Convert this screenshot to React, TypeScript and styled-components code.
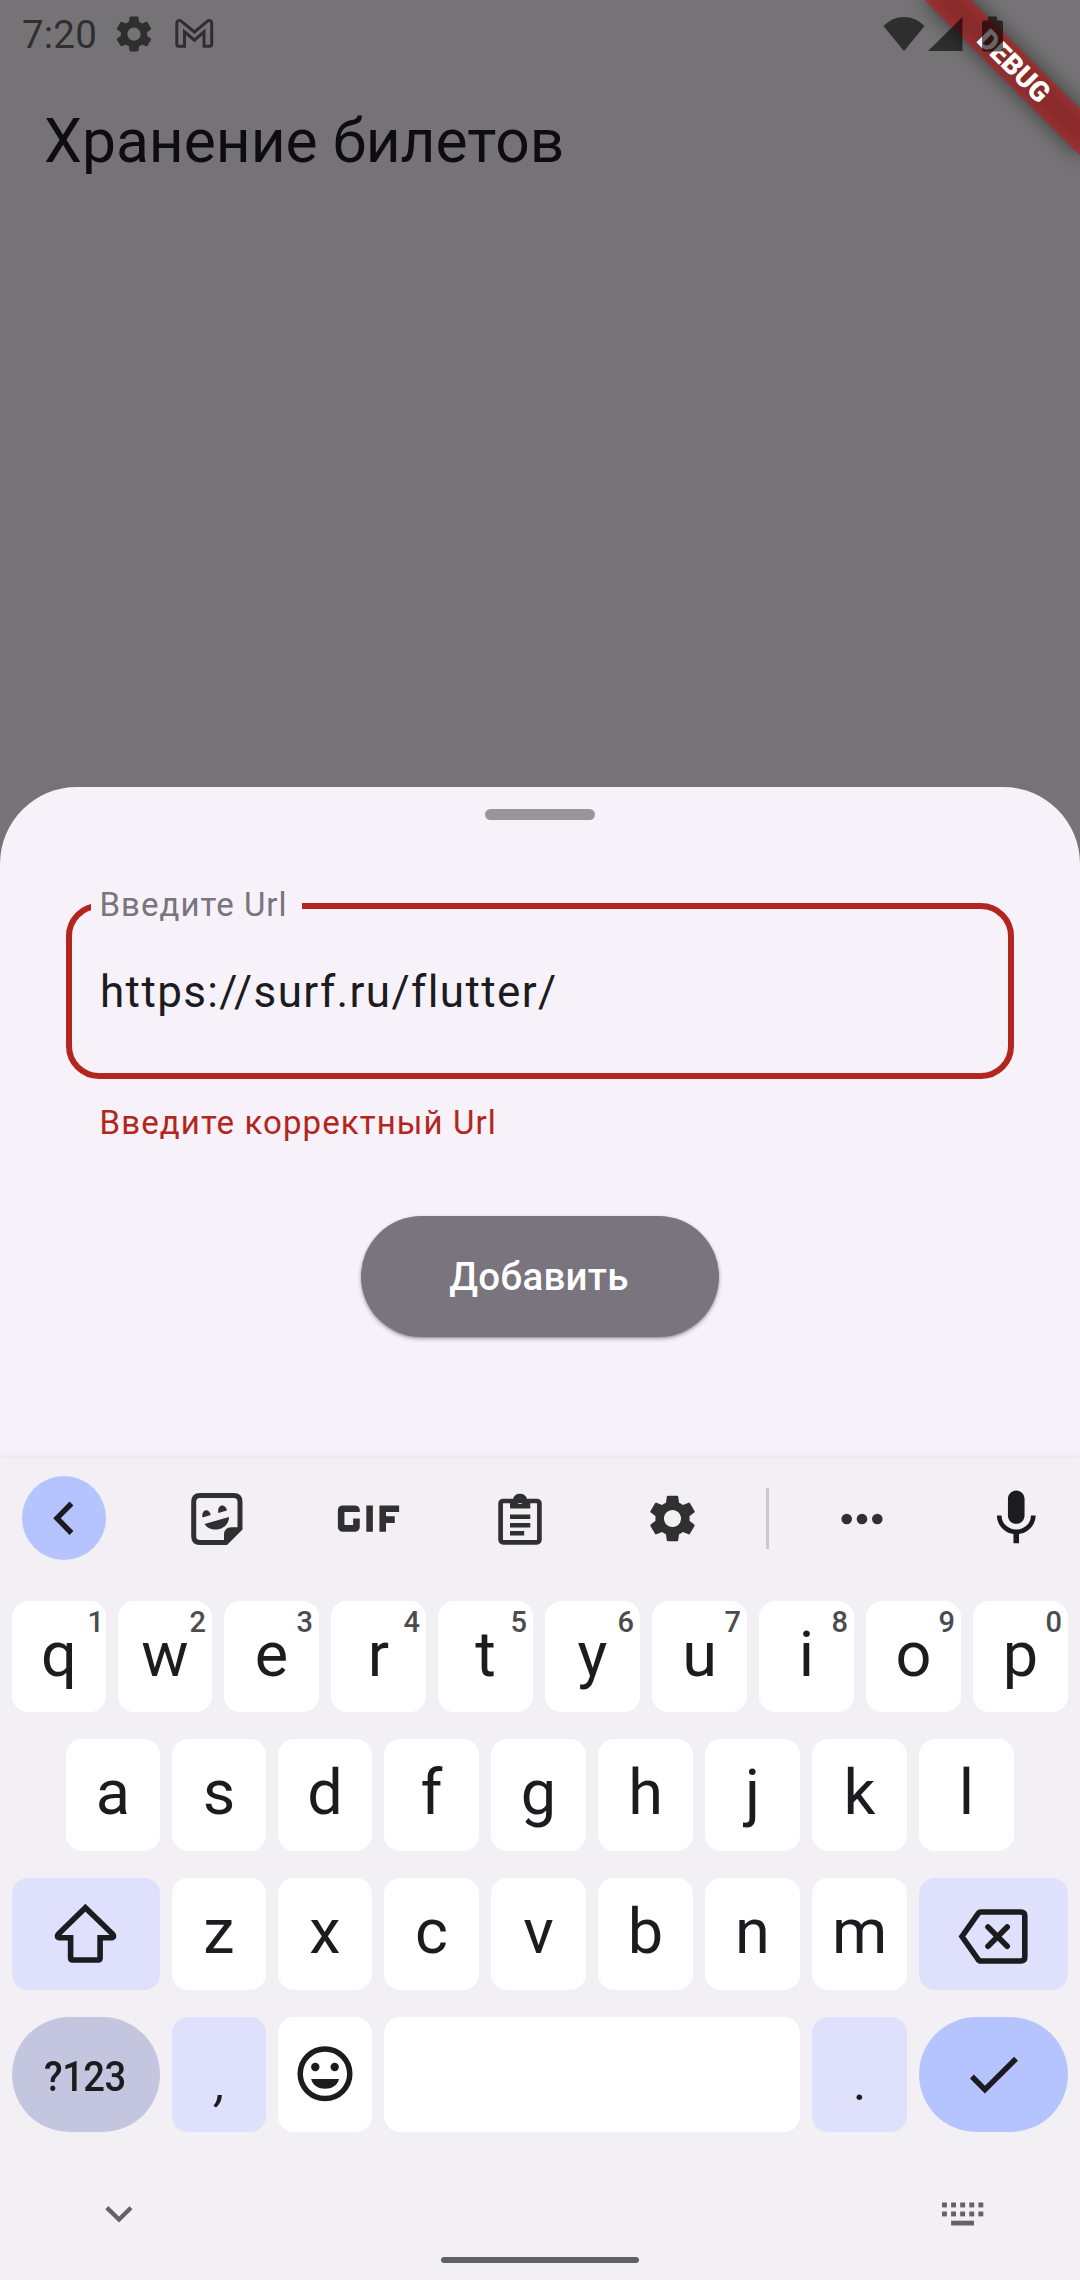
import React from "react";
import styled, { createGlobalStyle } from "styled-components";
import { MdGif, MdMic, MdSettings } from "react-icons/md";

const GlobalStyle = createGlobalStyle`
  html, body { margin: 0; padding: 0; }
  body { width: 1080px; height: 2280px; overflow: hidden; background: #757375; }
  svg { display: block; flex: none; }
`;

const Screen = styled.div`
  position: relative;
  display: flex;
  flex-direction: column;
  width: 1080px;
  height: 2280px;
  overflow: hidden;
  background: #757375;
  font-family: Roboto, "Noto Sans", sans-serif;
`;

const StatusBar = styled.header`
  position: relative;
  z-index: 2;
  display: flex;
  align-items: center;
  box-sizing: border-box;
  height: 66px;
  padding: 1px 77px 0 22px;
  color: rgba(0, 0, 0, 0.6);
`;

const Clock = styled.span`
  width: 90px;
  padding-top: 2px;
  font-size: 38.5px;
  line-height: 66px;
  letter-spacing: 0.2px;
`;

const StatusGroup = styled.div<{ $gap: number; $push?: boolean }>`
  display: flex;
  align-items: center;
  gap: ${(p) => p.$gap}px;
  margin-left: ${(p) => (p.$push ? "auto" : "0")};
`;

const BannerClip = styled.div`
  position: absolute;
  top: 0;
  right: 0;
  width: 260px;
  height: 260px;
  overflow: hidden;
`;

const BannerFrame = styled.div`
  position: absolute;
  top: 77px;
  left: 150px;
  width: 220px;
  height: 33px;
  transform-origin: 110px -77px;
  transform: rotate(45deg);
`;

const BannerShadow = styled.div`
  position: absolute;
  inset: 0;
  background: rgba(0, 0, 0, 0.5);
  filter: blur(10.5px);
`;

const BannerLabel = styled.div`
  position: relative;
  height: 33px;
  background: rgba(183, 28, 28, 0.627);
  color: #fff;
  font-size: 28px;
  font-weight: 900;
  line-height: 33px;
  text-align: center;
`;

const AppBar = styled.div`
  flex: 1;
  padding: 26px 44px 0;
`;

const Title = styled.h1`
  margin: 0;
  color: #0d0c0e;
  font-size: 60.5px;
  font-weight: 400;
  line-height: 100px;
`;

const Sheet = styled.section`
  display: flex;
  flex-direction: column;
  align-items: center;
  box-sizing: border-box;
  height: 671px;
  padding: 22px 66px 0;
  border-radius: 77px 77px 0 0;
  background: #f7f2f9;
`;

const DragHandle = styled.div`
  width: 110px;
  height: 11px;
  border-radius: 5.5px;
  background: #999699;
`;

const Field = styled.div`
  position: relative;
  display: flex;
  align-items: center;
  box-sizing: border-box;
  width: 948px;
  height: 176px;
  margin-top: 82.5px;
  padding: 2px 28px 0;
  border: 6px solid #b3261e;
  border-radius: 33px;
`;

const FieldLabel = styled.label`
  position: absolute;
  top: -24px;
  left: 19px;
  box-sizing: border-box;
  width: 211px;
  padding-left: 8.5px;
  background: #f7f2f9;
  color: #79747e;
  font-size: 33px;
  line-height: 40px;
  letter-spacing: 1.03px;
  white-space: nowrap;
`;

const FieldValue = styled.span`
  color: #1c1b1f;
  font-size: 44px;
  line-height: 60px;
  letter-spacing: 1.375px;
`;

const ErrorText = styled.p`
  align-self: flex-start;
  margin: 24.5px 0 0 33.5px;
  color: #b3261e;
  font-size: 33px;
  line-height: 40px;
  letter-spacing: 1.1px;
`;

const AddButton = styled.button`
  width: 358px;
  height: 121px;
  margin-top: 72.5px;
  padding: 1px 2px 0 0;
  border: 0;
  border-radius: 61px;
  background: #79747e;
  box-shadow: 0 2px 4px rgba(0, 0, 0, 0.3), 0 1px 2px rgba(0, 0, 0, 0.14);
  color: #fff;
  font: 500 38.5px/60px Roboto, "Noto Sans", sans-serif;
  letter-spacing: 0.275px;
`;

const Keyboard = styled.section`
  display: flex;
  flex-direction: column;
  box-sizing: border-box;
  height: 822px;
  background: #f2f0f5;
  box-shadow: 0 0 5px rgba(0, 0, 0, 0.1);
  color: #1c1b1f;
`;

const Toolbar = styled.div`
  display: flex;
  align-items: center;
  height: 120px;
  margin-bottom: 23px;
  padding-left: 22px;
`;

const CollapseButton = styled.div`
  display: flex;
  align-items: center;
  justify-content: center;
  width: 84px;
  height: 84px;
  margin-right: 35px;
  border-radius: 50%;
  background: #b5c4ff;
`;

const Tool = styled.div<{ $width: number; $dark?: boolean }>`
  display: flex;
  align-items: center;
  justify-content: center;
  width: ${(p) => p.$width}px;
  padding-top: 1px;
  color: ${(p) => (p.$dark ? "#1c1b1f" : "#303030")};
`;

const Divider = styled.div`
  width: 3px;
  height: 61px;
  margin-left: 18px;
  background: #cac8cd;
`;

const KeyRow = styled.div<{ $columns: string; $inset: number; $height: number }>`
  display: grid;
  grid-template-columns: ${(p) => p.$columns};
  gap: 12px;
  height: ${(p) => p.$height}px;
  margin-bottom: 27px;
  padding: 0 ${(p) => p.$inset}px;
`;

type Tone = "plain" | "tint" | "slate" | "accent";
const tones: Record<Tone, string> = {
  plain: "#ffffff",
  tint: "#dfe0fb",
  slate: "#c4c5df",
  accent: "#b5c4ff",
};

const Key = styled.div<{ $tone?: Tone; $pill?: boolean }>`
  position: relative;
  display: flex;
  align-items: center;
  justify-content: center;
  min-width: 0;
  border-radius: ${(p) => (p.$pill ? 57.5 : 16)}px;
  background: ${(p) => tones[p.$tone ?? "plain"]};
`;

const Letter = styled.span`
  padding-bottom: 4px;
  font-size: 63px;
  line-height: 80px;
`;

const Hint = styled.span<{ $narrow: boolean }>`
  position: absolute;
  top: 6px;
  right: ${(p) => (p.$narrow ? 2 : 6)}px;
  color: #4c4c4f;
  font-size: 29px;
  font-weight: 500;
  line-height: 30px;
`;

const ModeText = styled.span`
  padding: 4px 2px 0 0;
  font-size: 42px;
  font-weight: 500;
  letter-spacing: -0.6px;
  transform: scaleX(0.91);
`;

const Punctuation = styled.span<{ $slanted?: boolean }>`
  padding: 17px 0 0 ${(p) => (p.$slanted ? 4 : 0)}px;
  font-size: 50px;
  font-style: ${(p) => (p.$slanted ? "italic" : "normal")};
  line-height: 60px;
`;

const NavRow = styled.div`
  display: flex;
  justify-content: space-between;
  align-items: center;
  height: 30px;
  margin-top: 40px;
  padding: 0 95px 0 103.5px;
  color: #636363;
`;

const HomeBar = styled.div`
  width: 198px;
  height: 6px;
  margin: 28px auto 0;
  border-radius: 3px;
  background: #606162;
`;

const GmailIcon = () => (
  <svg width="40" height="32" viewBox="174 17 40 32" fill="none" stroke="currentColor" strokeWidth="3">
    <path d="M178.800 45.300Q176.800 45.300 176.800 43.300V22.400C176.800 19.600 179.400 18.600 181.400 20.300L194.400 31L207.200 20.300C209.200 18.600 211.700 19.600 211.700 22.400V43.300Q211.700 45.300 209.700 45.300H204V30.800L194.400 39.200L184.500 30.800V45.300Z" />
  </svg>
);

const WifiIcon = () => (
  <svg width="42" height="36" viewBox="0 0 42 36" fill="currentColor">
    <path d="M21 35L.4 10Q9.500 1 21 1T41.600 10Z" />
  </svg>
);

const SignalIcon = () => (
  <svg width="35" height="36" viewBox="0 0 35 36" fill="currentColor">
    <path d="M0 35L34.500 1V35Z" />
  </svg>
);

const BatteryIcon = () => (
  <svg width="21" height="36" viewBox="0 0 21 36" fill="currentColor">
    <path d="M6 .500H15V4.500H19Q21 4.500 21 6.500V33.500Q21 35.500 19 35.500H2Q0 35.500 0 33.500V6.500Q0 4.500 2 4.500H6Z" />
  </svg>
);

const BackIcon = () => (
  <svg width="24" height="36" viewBox="52 1500 24 36" fill="none" stroke="#1c1b1f" strokeWidth="5.4">
    <path d="M71.500 1503.500L57 1518.200L71.500 1533" />
  </svg>
);

const StickerIcon = () => (
  <svg width="54" height="54" viewBox="190 1491.500 54 54">
    <path
      d="M226 1542H200Q193.700 1542 193.700 1535.700V1501.300Q193.700 1495 200 1495H233.700Q240 1495 240 1501.300V1528Z"
      fill="none"
      stroke="currentColor"
      strokeWidth="5"
    />
    <path d="M224 1542V1534.500Q224 1526.800 231.500 1526.800H241L226 1542Z" fill="currentColor" />
    <path d="M202.500 1517C200.800 1508.500 209.500 1507 210.800 1514.600Z" fill="currentColor" />
    <path d="M218.300 1512.500C216.800 1503.500 225.500 1502.500 227 1509.900Z" fill="currentColor" />
    <path d="M204.500 1523.400L229 1516.600C229 1529.500 210.500 1533.500 204.500 1523.400Z" fill="currentColor" />
  </svg>
);

const ClipboardIcon = () => (
  <svg width="44" height="54" viewBox="498.400 1491.500 44 54">
    <rect x="501" y="1500.500" width="38.800" height="41.300" rx="2.500" fill="none" stroke="currentColor" strokeWidth="4.700" />
    <path
      d="M510.400 1508V1499H513.200A7.400 7.400 0 0 1 527.600 1499H530.700V1508ZM520.400 1498.200A2.700 2.700 0 1 0 520.400 1503.600A2.700 2.700 0 1 0 520.400 1498.200Z"
      fill="currentColor"
      fillRule="evenodd"
    />
    <path d="M510.400 1516.200H530.700M510.400 1524.700H530.700M510.400 1532.800H524.600" stroke="currentColor" strokeWidth="4.400" />
  </svg>
);

const DotsIcon = () => (
  <svg width="42" height="12" viewBox="0 0 42 12" fill="currentColor">
    <circle cx="5.7" cy="6" r="5.300" />
    <circle cx="21" cy="6" r="5.300" />
    <circle cx="36.300" cy="6" r="5.300" />
  </svg>
);

const ShiftIcon = () => (
  <svg width="66" height="64" viewBox="53.100 1901.500 66 64" fill="none" stroke="currentColor" strokeWidth="5.600">
    <path d="M70.700 1937.200H59.800Q56 1936.800 58.500 1933.500L85.500 1907.200L112.700 1933.500Q115.200 1936.800 111.400 1937.200H100.200V1957.500Q100.200 1959.500 98.200 1959.500H72.700Q70.700 1959.500 70.700 1957.500Z" />
  </svg>
);

const BackspaceIcon = () => (
  <svg width="72" height="58" viewBox="957.500 1905 72 58" overflow="visible" fill="none" stroke="currentColor" strokeWidth="5.600">
    <path d="M980.500 1912H1020.200Q1024.300 1912 1024.300 1916V1957Q1024.300 1961 1020.200 1961H980.500Q978.500 1961 977.300 1959L961.500 1936.500L977.300 1914Q978.500 1912 980.500 1912Z" />
    <path d="M987.500 1927L1006.700 1946.200M1006.700 1927L987.500 1946.200" strokeLinecap="round" />
  </svg>
);

const EmojiIcon = () => (
  <svg width="56" height="57" viewBox="0 0 56 57" fill="currentColor">
    <circle cx="28" cy="27.800" r="24.800" fill="none" stroke="currentColor" strokeWidth="5.500" />
    <circle cx="18.300" cy="21" r="4.200" />
    <circle cx="37.700" cy="21" r="4.200" />
    <path d="M14.200 33H42C39.500 46 16.700 46 14.200 33Z" />
  </svg>
);

const CheckIcon = () => (
  <svg width="52" height="40" viewBox="967.700 2054.500 52 40" fill="none" stroke="currentColor" strokeWidth="5.500">
    <path d="M971.600 2076L984.600 2089.200L1015.700 2058.200" />
  </svg>
);

const HideIcon = () => (
  <svg width="30" height="20" viewBox="103.500 2204 30 20" fill="none" stroke="currentColor" strokeWidth="4.400">
    <path d="M106.300 2207.700L118.500 2219.500L130.500 2207.700" />
  </svg>
);

const KeyboardIcon = () => (
  <svg width="44" height="24" viewBox="941 2202.500 44 24" fill="currentColor">
    {[942, 951.1, 960.2, 969.3, 978.4].map((x) => (
      <React.Fragment key={x}>
        <rect x={x} y="2203" width="4.900" height="4.900" />
        <rect x={x} y="2212" width="4.900" height="4.900" />
      </React.Fragment>
    ))}
    <rect x="951.100" y="2221.200" width="22.900" height="4.800" />
  </svg>
);

const LetterKey = ({ char, hint }: { char: string; hint?: string }) => (
  <Key>
    <Letter>{char}</Letter>
    {hint && <Hint $narrow={hint === "1"}>{hint}</Hint>}
  </Key>
);

const topRow = "qwertyuiop".split("");
const homeRow = "asdfghjkl".split("");
const bottomRow = "zxcvbnm".split("");

export default function App() {
  return (
    <Screen>
      <GlobalStyle />
      <StatusBar>
        <Clock>7:20</Clock>
        <StatusGroup $gap={18}>
          <MdSettings size={44} />
          <GmailIcon />
        </StatusGroup>
        <StatusGroup $gap={19.5} $push>
          <StatusGroup $gap={2.5}>
            <WifiIcon />
            <SignalIcon />
          </StatusGroup>
          <BatteryIcon />
        </StatusGroup>
      </StatusBar>
      <BannerClip>
        <BannerFrame>
          <BannerShadow />
          <BannerLabel>DEBUG</BannerLabel>
        </BannerFrame>
      </BannerClip>
      <AppBar>
        <Title>Хранение билетов</Title>
      </AppBar>
      <Sheet>
        <DragHandle />
        <Field>
          <FieldLabel>Введите Url</FieldLabel>
          <FieldValue>https://surf.ru/flutter/</FieldValue>
        </Field>
        <ErrorText>Введите корректный Url</ErrorText>
        <AddButton>Добавить</AddButton>
      </Sheet>
      <Keyboard>
        <Toolbar>
          <CollapseButton>
            <BackIcon />
          </CollapseButton>
          <Tool $width={152}>
            <StickerIcon />
          </Tool>
          <Tool $width={150}>
            <MdGif size={105} />
          </Tool>
          <Tool $width={154}>
            <ClipboardIcon />
          </Tool>
          <Tool $width={151}>
            <MdSettings size={57} />
          </Tool>
          <Divider />
          <Tool $width={185}>
            <DotsIcon />
          </Tool>
          <Tool $width={124} $dark>
            <MdMic size={66.5} />
          </Tool>
        </Toolbar>
        <KeyRow $columns="repeat(2, 94px) repeat(8, 95px)" $inset={12} $height={111}>
          {topRow.map((char, i) => (
            <LetterKey key={char} char={char} hint={String((i + 1) % 10)} />
          ))}
        </KeyRow>
        <KeyRow $columns="repeat(3, 94px) repeat(6, 95px)" $inset={66} $height={112}>
          {homeRow.map((char) => (
            <LetterKey key={char} char={char} />
          ))}
        </KeyRow>
        <KeyRow $columns="148px repeat(2, 94px) repeat(5, 95px) 149px" $inset={12} $height={112}>
          <Key $tone="tint">
            <ShiftIcon />
          </Key>
          {bottomRow.map((char) => (
            <LetterKey key={char} char={char} />
          ))}
          <Key $tone="tint">
            <BackspaceIcon />
          </Key>
        </KeyRow>
        <KeyRow $columns="148px 94px 94px 1fr 95px 149px" $inset={12} $height={115}>
          <Key $tone="slate" $pill>
            <ModeText>?123</ModeText>
          </Key>
          <Key $tone="tint">
            <Punctuation $slanted>,</Punctuation>
          </Key>
          <Key>
            <EmojiIcon />
          </Key>
          <Key />
          <Key $tone="tint">
            <Punctuation>.</Punctuation>
          </Key>
          <Key $tone="accent" $pill>
            <CheckIcon />
          </Key>
        </KeyRow>
        <NavRow>
          <HideIcon />
          <KeyboardIcon />
        </NavRow>
        <HomeBar />
      </Keyboard>
    </Screen>
  );
}
